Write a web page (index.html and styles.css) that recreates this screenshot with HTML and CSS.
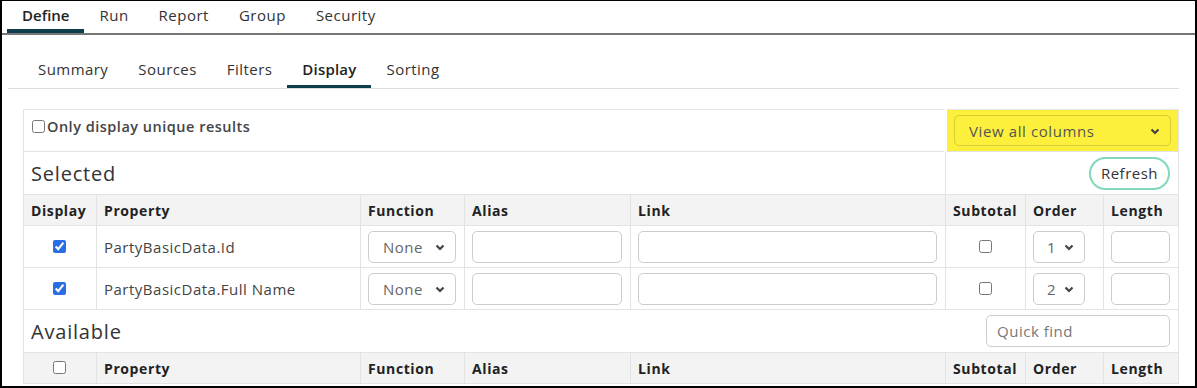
FILE: index.html
```html
<!DOCTYPE html>
<html lang="en">
<head>
  <meta charset="UTF-8">
  <title>Query - Display</title>
  <meta name="viewport" content="width=device-width, initial-scale=1.0">
  <link rel="stylesheet" href="styles.css">
</head>
<body>

  <div class="frame">
    <nav class="main-tabs">
      <a class="tab active">Define</a>
      <a class="tab">Run</a>
      <a class="tab">Report</a>
      <a class="tab">Group</a>
      <a class="tab">Security</a>
    </nav>

    <div class="page">
      <nav class="sub-tabs">
        <a class="sub-tab">Summary</a>
        <a class="sub-tab">Sources</a>
        <a class="sub-tab">Filters</a>
        <a class="sub-tab active">Display</a>
        <a class="sub-tab">Sorting</a>
      </nav>

      <table class="grid">
        <colgroup>
          <col class="c-display">
          <col class="c-property">
          <col class="c-function">
          <col class="c-alias">
          <col class="c-link">
          <col class="c-subtotal">
          <col class="c-order">
          <col class="c-length">
        </colgroup>

        <tr class="options-row">
          <td colspan="5" class="unique">
            <label><input type="checkbox" class="plain-check"> Only display unique results</label>
          </td>
          <td colspan="3" class="highlight">
            <div class="select-wrap">
              <select class="view-select">
                <option>View all columns</option>
              </select>
              <svg class="chev" width="10" height="7" viewBox="0 0 10 7"><path d="M1.5 1.5 L5 5 L8.5 1.5" fill="none" stroke="#444" stroke-width="2.2"/></svg>
            </div>
          </td>
        </tr>

        <tr class="section-row">
          <td colspan="5" class="section-title">Selected</td>
          <td colspan="3" class="right"><button class="refresh">Refresh</button></td>
        </tr>

        <tr class="head-row">
          <th>Display</th>
          <th>Property</th>
          <th>Function</th>
          <th>Alias</th>
          <th>Link</th>
          <th>Subtotal</th>
          <th>Order</th>
          <th>Length</th>
        </tr>

        <tr class="data-row">
          <td class="center"><input type="checkbox" class="blue-check" checked></td>
          <td>PartyBasicData.Id</td>
          <td>
            <div class="select-wrap">
              <select class="field-select"><option>None</option></select>
              <svg class="chev" width="10" height="7" viewBox="0 0 10 7"><path d="M1.5 1.5 L5 5 L8.5 1.5" fill="none" stroke="#444" stroke-width="2.2"/></svg>
            </div>
          </td>
          <td><input type="text" class="field"></td>
          <td><input type="text" class="field"></td>
          <td class="center"><input type="checkbox" class="plain-check"></td>
          <td>
            <div class="select-wrap order">
              <select class="field-select"><option>1</option></select>
              <svg class="chev" width="10" height="7" viewBox="0 0 10 7"><path d="M1.5 1.5 L5 5 L8.5 1.5" fill="none" stroke="#444" stroke-width="2.2"/></svg>
            </div>
          </td>
          <td><input type="text" class="field"></td>
        </tr>

        <tr class="data-row">
          <td class="center"><input type="checkbox" class="blue-check" checked></td>
          <td>PartyBasicData.Full Name</td>
          <td>
            <div class="select-wrap">
              <select class="field-select"><option>None</option></select>
              <svg class="chev" width="10" height="7" viewBox="0 0 10 7"><path d="M1.5 1.5 L5 5 L8.5 1.5" fill="none" stroke="#444" stroke-width="2.2"/></svg>
            </div>
          </td>
          <td><input type="text" class="field"></td>
          <td><input type="text" class="field"></td>
          <td class="center"><input type="checkbox" class="plain-check"></td>
          <td>
            <div class="select-wrap order">
              <select class="field-select"><option>2</option></select>
              <svg class="chev" width="10" height="7" viewBox="0 0 10 7"><path d="M1.5 1.5 L5 5 L8.5 1.5" fill="none" stroke="#444" stroke-width="2.2"/></svg>
            </div>
          </td>
          <td><input type="text" class="field"></td>
        </tr>

        <tr class="section-row">
          <td colspan="8" class="section-title">
            <div class="avail">
              <span>Available</span>
              <input type="text" class="field quick" placeholder="Quick find">
            </div>
          </td>
        </tr>

        <tr class="head-row">
          <th class="center"><input type="checkbox" class="plain-check"></th>
          <th>Property</th>
          <th>Function</th>
          <th>Alias</th>
          <th>Link</th>
          <th>Subtotal</th>
          <th>Order</th>
          <th>Length</th>
        </tr>
      </table>
    </div>
  </div>

</body>
</html>
```

FILE: styles.css
```css
body {
  margin: 0;
  background-color: #fff;
  font-family: "Open Sans", "Noto Sans", sans-serif;
  color: #333;
}

.frame {
  height: 388px;
  box-sizing: border-box;
  border: 2px solid #000;
  border-top-width: 1px;
  overflow: hidden;
}

/* top tabs */
.main-tabs {
  display: flex;
  height: 32px;
  padding-left: 5px;
  border-bottom: 2px solid #777;
}

.tab {
  padding: 0 15px;
  line-height: 28px;
  font-size: 15px;
  letter-spacing: 0.5px;
  color: #333;
  border-bottom: 4px solid transparent;
}

.tab.active {
  font-weight: 600;
  letter-spacing: 0;
  color: #222;
  border-bottom-color: #0e3d4c;
}

.page {
  margin: 0 16px 0 6px;
}

/* second level tabs */
.sub-tabs {
  display: flex;
  padding-left: 14px;
  border-bottom: 1px solid #ddd;
}

.sub-tab {
  padding: 20px 15px 2px;
  line-height: 28px;
  font-size: 15px;
  letter-spacing: 0.45px;
  color: #333;
  border-bottom: 3px solid transparent;
}

.sub-tab:first-child {
  padding-left: 16px;
}

.sub-tab.active {
  font-weight: 600;
  letter-spacing: 0.2px;
  color: #222;
  border-bottom-color: #0e3d4c;
}

/* table */
.grid {
  margin: 20px 0 0 15px;
  width: 1155px;
  table-layout: fixed;
  border-collapse: collapse;
  font-size: 14px;
}

.c-display { width: 73px; }
.c-property { width: 264px; }
.c-function { width: 104px; }
.c-alias { width: 166px; }
.c-link { width: 315px; }
.c-subtotal { width: 80px; }
.c-order { width: 78px; }
.c-length { width: 75px; }

.grid td,
.grid th {
  border: 1px solid #e3e3e3;
  padding: 0 8px 0 7px;
  text-align: left;
  white-space: nowrap;
}

.grid .center {
  text-align: center;
}

.grid .right {
  text-align: right;
}

.options-row {
  height: 42px;
}

.unique {
  vertical-align: top;
  padding-top: 7px !important;
  font-size: 14.5px;
  font-weight: 600;
  letter-spacing: 0.5px;
  color: #444;
}

.unique label {
  display: flex;
  align-items: center;
  gap: 2px;
  margin-left: 1px;
}

.highlight {
  background-color: #fdf03c;
  border-left: 3px solid #fff !important;
  padding: 0 7px !important;
}

.select-wrap {
  position: relative;
}

.select-wrap .chev {
  position: absolute;
  right: 11px;
  top: 13px;
  pointer-events: none;
}

.view-select {
  appearance: none;
  width: 100%;
  height: 31px;
  padding: 0 14px;
  font-family: inherit;
  font-size: 15px;
  letter-spacing: 0.6px;
  color: #555;
  background-color: #fdf03c;
  border: 1px solid #d9cc34;
  border-radius: 5px;
}

.section-row {
  height: 43px;
}

.section-title {
  font-size: 20px;
  letter-spacing: 0.8px;
  color: #333;
}

.refresh {
  font-family: inherit;
  font-size: 15px;
  letter-spacing: 0.5px;
  color: #333;
  background-color: #fff;
  border: 2px solid #82d8b7;
  border-radius: 17px;
  height: 33px;
  padding: 0 10px;
}

.head-row {
  height: 31px;
  background-color: #f3f3f3;
}

.head-row th {
  font-weight: 700;
  letter-spacing: 0.6px;
  color: #222;
}

.data-row {
  height: 42px;
}

.data-row td {
  font-size: 15px;
  letter-spacing: 0.5px;
  color: #444;
}

.field-select {
  appearance: none;
  width: 100%;
  height: 32px;
  padding: 0 14px;
  font-family: inherit;
  font-size: 15px;
  letter-spacing: 0.5px;
  color: #666;
  background-color: #fff;
  border: 1px solid #ccc;
  border-radius: 5px;
}

.select-wrap.order {
  width: 52px;
}

.select-wrap.order .field-select {
  padding: 0 0 0 13px;
}

.field {
  display: block;
  box-sizing: border-box;
  width: 100%;
  height: 32px;
  padding: 0 10px;
  font-family: inherit;
  font-size: 15px;
  border: 1px solid #ccc;
  border-radius: 5px;
}

.blue-check {
  accent-color: #2a6ee6;
  width: 13px;
  height: 13px;
  margin: 0;
}

.plain-check {
  width: 13px;
  height: 13px;
  margin: 0;
}

.avail {
  display: flex;
  align-items: center;
  justify-content: space-between;
}

.field.quick {
  width: 184px;
  font-size: 15px;
  letter-spacing: 0.5px;
  color: #666;
}

.field.quick::placeholder {
  color: #777;
}
```
